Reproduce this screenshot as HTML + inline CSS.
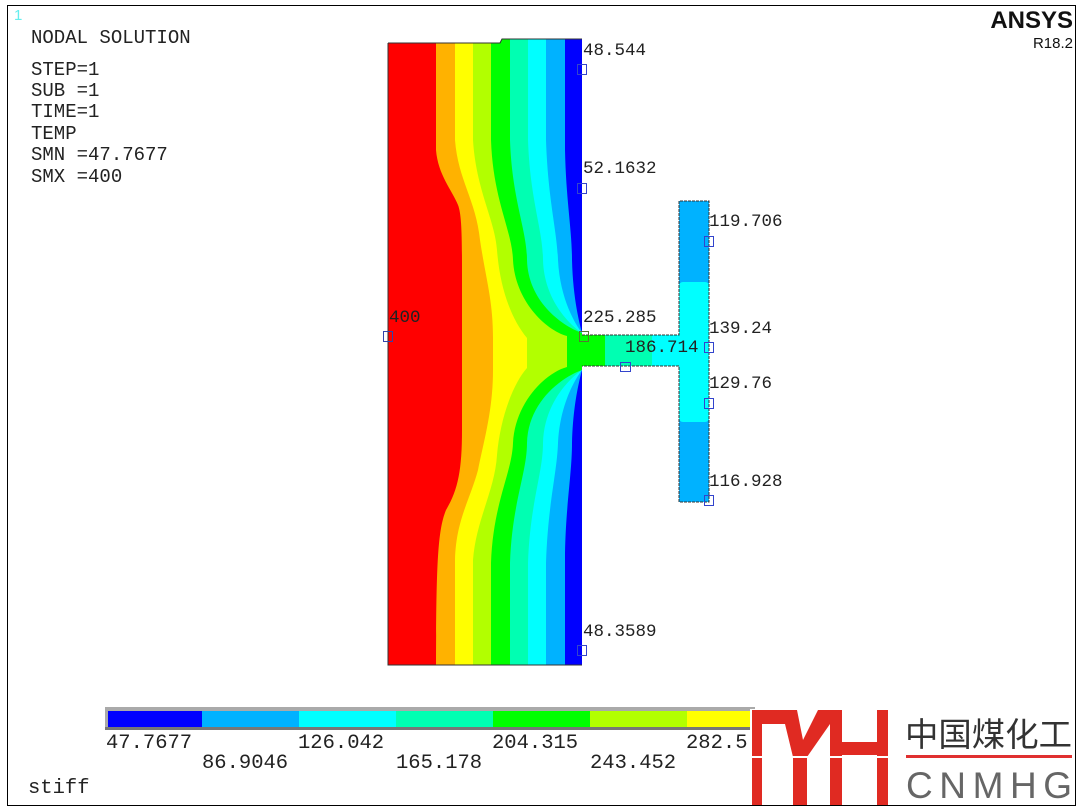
<!DOCTYPE html>
<html><head><meta charset="utf-8"><style>
html,body{margin:0;padding:0;background:#fff;}
svg{display:block;}
.m{font-family:"Liberation Mono",monospace;fill:#222;}
</style></head><body>
<svg width="1080" height="810" viewBox="0 0 1080 810" xmlns="http://www.w3.org/2000/svg">
<defs>
<clipPath id="body"><path d="M388,43 L500,43 L502,39 L582,39 L582,665 L388,665 Z"/></clipPath>
</defs>
<rect x="0" y="0" width="1080" height="810" fill="#fff"/>
<rect x="7.5" y="5.5" width="1068" height="800" fill="none" stroke="#000" stroke-width="1"/>
<text x="14" y="20" font-family="Liberation Sans,sans-serif" font-size="15" fill="#6ee">1</text>
<g class="m" font-size="19">
<text x="31" y="43" class="m">NODAL SOLUTION</text>
<text x="31" y="75" class="m">STEP=1</text>
<text x="31" y="96" class="m">SUB =1</text>
<text x="31" y="117" class="m">TIME=1</text>
<text x="31" y="139" class="m">TEMP</text>
<text x="31" y="160" class="m">SMN =47.7677</text>
<text x="31" y="182" class="m">SMX =400</text>
</g>
<text x="1073" y="28" text-anchor="end" font-family="Liberation Sans,sans-serif" font-weight="bold" font-size="24" fill="#111">ANSYS</text>
<text x="1073" y="48" text-anchor="end" font-family="Liberation Sans,sans-serif" font-size="15" fill="#111">R18.2</text>

<g clip-path="url(#body)">
<rect x="388" y="39" width="194" height="626" fill="#ff0000"/>
<path d="M436,30 L436,150 C438,175 452,190 458,205 C462,215 462,240 462,280 L462,430 C462,470 458,490 446,510 C438,530 436,560 436,680 L600,680 L600,30 Z" fill="#ffb200"/>
<path d="M455,30 L455,140 C458,180 476,200 480,240 C486,280 493,300 493,338 L493,370 C493,410 484,440 478,470 C470,500 456,520 455,560 L455,680 L600,680 L600,30 Z" fill="#ffff00"/>
<path d="M473,30 L473,140 C476,190 495,220 497,250 C500,290 512,320 527,338 L527,368 C512,385 500,420 497,455 C495,490 476,520 473,560 L473,680 L600,680 L600,30 Z" fill="#b2ff00"/>
<path d="M491,30 L491,140 C493,200 512,230 513,260 C515,300 545,330 567,336 L567,367 C545,373 515,403 513,443 C512,473 493,503 491,563 L491,680 L600,680 L600,30 Z" fill="#00ff00"/>
<path d="M510,30 L510,140 C512,200 527,230 527,260 C528,300 560,325 582,333 L582,370 C560,378 528,403 527,443 C527,473 512,503 510,563 L510,680 L600,680 L600,30 Z" fill="#00ffb2"/>
<path d="M528,30 L528,140 C530,200 543,230 543,260 C544,300 570,325 582,333 L582,370 C570,378 544,403 543,443 C543,473 530,503 528,563 L528,680 L600,680 L600,30 Z" fill="#00ffff"/>
<path d="M546,30 L546,140 C548,200 557,230 558,260 C560,300 576,325 582,333 L582,370 C576,378 560,403 558,443 C557,473 548,503 546,563 L546,680 L600,680 L600,30 Z" fill="#00b2ff"/>
<path d="M565,30 L565,150 C566,200 572,230 572,260 C573,300 580,325 582,333 L582,370 C580,378 573,403 572,443 C572,473 566,503 565,553 L565,680 L600,680 L600,30 Z" fill="#0000ff"/>
</g>
<rect x="582" y="335" width="23" height="31" fill="#00ff00"/>
<rect x="605" y="335" width="47" height="31" fill="#00ffb2"/>
<rect x="652" y="335" width="28" height="31" fill="#00ffff"/>
<rect x="679" y="201" width="30" height="301" fill="#00b2ff"/>
<rect x="679" y="282" width="30" height="140" rx="4" fill="#00ffff"/>
<path d="M582,335 L679,335 L679,201 L709,201 L709,502 L679,502 L679,366 L582,366" fill="none" stroke="#333" stroke-width="1" stroke-dasharray="3,1"/>
<path d="M388,43 L500,43 L502,39 L582,39 M388,43 L388,665 L582,665" fill="none" stroke="#333" stroke-width="1"/>

<g fill="none" stroke="#3344cc" stroke-width="1">
<rect x="577.5" y="64.5" width="9" height="10"/>
<rect x="577.5" y="183.5" width="9" height="10"/>
<rect x="579.5" y="331.5" width="9" height="10" stroke="#557733"/>
<rect x="383.5" y="331.5" width="9" height="10" stroke="#3344aa"/>
<rect x="620.5" y="362.5" width="10" height="9"/>
<rect x="704.5" y="236.5" width="9" height="10"/>
<rect x="704.5" y="342.5" width="9" height="10"/>
<rect x="704.5" y="398.5" width="9" height="10"/>
<rect x="704.5" y="495.5" width="9" height="10"/>
<rect x="577.5" y="645.5" width="9" height="10"/>
</g>
<g class="m" font-size="17.5">
<text x="583" y="55" class="m">48.544</text>
<text x="583" y="173" class="m">52.1632</text>
<text x="583" y="322" class="m">225.285</text>
<text x="389" y="322" class="m" fill="#ddd">400</text>
<text x="625" y="352" class="m" fill="#555">186.714</text>
<text x="709" y="226" class="m">119.706</text>
<text x="709" y="333" class="m">139.24</text>
<text x="709" y="388" class="m">129.76</text>
<text x="709" y="486" class="m">116.928</text>
<text x="583" y="636" class="m">48.3589</text>
</g>

<rect x="105" y="707" width="650" height="23" fill="#aaa"/>
<rect x="105" y="727" width="650" height="3" fill="#777"/>
<rect x="108" y="711" width="94" height="16" fill="#0000ff"/>
<rect x="202" y="711" width="97" height="16" fill="#00b2ff"/>
<rect x="299" y="711" width="97" height="16" fill="#00ffff"/>
<rect x="396" y="711" width="97" height="16" fill="#00ffb2"/>
<rect x="493" y="711" width="97" height="16" fill="#00ff00"/>
<rect x="590" y="711" width="97" height="16" fill="#b2ff00"/>
<rect x="687" y="711" width="68" height="16" fill="#ffff00"/>
<g class="m" font-size="20.5">
<text x="106" y="748" class="m">47.7677</text>
<text x="298" y="748" class="m">126.042</text>
<text x="492" y="748" class="m">204.315</text>
<text x="686" y="748" class="m">282.5</text>
<text x="202" y="768" class="m">86.9046</text>
<text x="396" y="768" class="m">165.178</text>
<text x="590" y="768" class="m">243.452</text>
<text x="28" y="793" class="m">stiff</text>
</g>

<rect x="750" y="709" width="325" height="96" fill="#fff"/>
<path d="M752,710 L797,710 L803,740 L818,710 L842,710 L842,742 L877,742 L877,710 L888,710 L888,805 L877,805 L877,755 L842,755 L842,805 L830,805 L830,724 L807,757 L807,805 L793,805 L793,757 L785,724 L762,724 L762,805 L752,805 Z" fill="#e02a22"/>
<rect x="750" y="756" width="140" height="2" fill="#fff"/>
<text x="905" y="746" font-family="'Noto Sans CJK SC',sans-serif" font-size="33" fill="#333" textLength="167" lengthAdjust="spacingAndGlyphs">中国煤化工</text>
<rect x="906" y="755" width="166" height="3" fill="#e03030"/>
<text x="906" y="798" font-family="Liberation Sans,sans-serif" font-size="37" fill="#666" textLength="166" lengthAdjust="spacing">CNMHG</text>
</svg>
</body></html>
